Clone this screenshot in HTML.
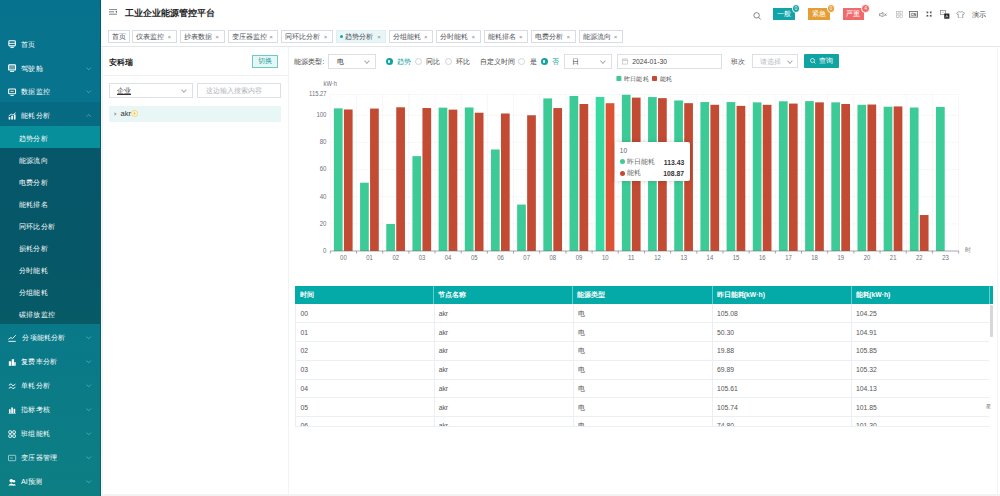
<!DOCTYPE html>
<html><head><meta charset="utf-8">
<style>
*{box-sizing:border-box;margin:0;padding:0}
html,body{width:1000px;height:496px;overflow:hidden;background:#fff;font-family:"Liberation Sans",sans-serif;}
.abs{position:absolute}
.ul .cj{text-decoration:underline}
.cj{display:inline-block;text-align:justify;text-align-last:justify;text-indent:0;white-space:nowrap}
#side{position:absolute;left:0;top:0;width:100.5px;height:496px;background:linear-gradient(180deg,#07728d 0%,#08758b 50%,#0d7f83 100%);overflow:hidden}
#side:after{content:"";position:absolute;right:0;top:0;width:1px;height:100%;background:rgba(0,40,60,.35)}
.mitem{position:absolute;left:0;width:100px;color:#fff;font-size:7.2px;}
.mic{position:absolute;left:8.4px;top:50%;margin-top:-2.5px}
.mt{position:absolute;left:21px;top:50%;margin-top:-2.2px;line-height:8px;white-space:nowrap}
.chev{position:absolute;left:86px;top:50%;margin-top:0px}
.mparent{position:absolute;left:0;width:100px;background:rgba(0,0,0,.07)}
.msub{position:absolute;left:0;width:100px;background:rgba(0,0,0,.25)}
.sitem{position:absolute;left:0;width:100px;height:22px;color:#fff;font-size:7.2px}
.sitem>span{position:absolute;left:18.8px;top:50%;margin-top:-2.4px;line-height:8px;white-space:nowrap}
.sitem.active{background:#078f9b}
#hdr{position:absolute;left:100.5px;top:0;width:899.5px;height:47.2px;border-bottom:1px solid #e4e6ea;background:#fff}
.title{position:absolute;left:124.6px;top:8.1px;font-size:9px;font-weight:bold;color:#222;white-space:nowrap;line-height:10px;letter-spacing:0px}
.tab{position:absolute;top:30px;height:12.6px;border:0.6px solid #d8dce5;background:#fff;font-size:6.8px;color:#4a4e56;white-space:nowrap;line-height:11.8px;padding-left:3.1px}
.tab.act{background:#e8f6f6;border-color:#e0f0f0}
.tab .dot{display:inline-block;width:3px;height:3px;border-radius:50%;background:#1aa1a1;margin-right:2.6px;vertical-align:1px}
.tab .x{position:absolute;right:4.6px;top:0.2px;font-weight:normal;font-size:6.2px;color:#8a8d92}
.badge{position:absolute;top:8.4px;height:11.5px;width:21.6px;color:#fff;font-size:7px;text-align:center;line-height:11.5px}
.cnt{position:absolute;width:8.6px;height:8.6px;border-radius:50%;color:#fff;font-size:5px;text-align:center;line-height:6.4px;border:0.6px solid #fff}
#lp{position:absolute;left:102.4px;top:47.4px;width:185px;height:446.4px;border-left:0.6px solid #f0f1f4;background:#fff}
#rp{position:absolute;left:287.5px;top:47.4px;width:710.5px;height:446.4px;border-left:1.4px solid #f2f3f6;border-right:1.2px solid #f2f3f6;background:#fff}
#gap{position:absolute;left:100.5px;top:47.4px;width:899.5px;height:448.6px;background:#fff}
#bot{position:absolute;left:100.5px;top:493.8px;width:899.5px;height:3px;background:#f2f3f5}
.inp{position:absolute;height:15px;border:0.6px solid #dcdfe6;background:#fff;font-size:7px;color:#333;line-height:14px;white-space:nowrap}
.sel:after{content:"";position:absolute;right:5.6px;top:4.4px;width:2.8px;height:2.8px;border-right:0.55px solid #aaa;border-bottom:0.55px solid #aaa;transform:rotate(45deg)}
.lbl{position:absolute;font-size:7px;color:#444;white-space:nowrap;line-height:8px}
.radio{position:absolute;width:7px;height:7px;border-radius:50%;border:0.6px solid #cfd3da;background:#fff}
.radio.on{border:0;background:#11a2a2}
.radio.on:after{content:"";position:absolute;left:2.2px;top:2.2px;width:2.6px;height:2.6px;border-radius:50%;background:#fff}
svg.chart{position:absolute;left:0;top:0;width:1000px;height:496px}
.al{font-size:6.6px;fill:#6e7079;font-family:"Liberation Sans",sans-serif}
.lg{font-size:6.4px;fill:#555;font-family:"Liberation Sans",sans-serif}
.thead{position:absolute;left:295px;top:286px;width:698px;height:17.6px;background:#04aaa7}
.th{position:absolute;top:291px;font-size:6.8px;color:#fff;font-weight:bold;line-height:8px;white-space:nowrap}
.thsep{position:absolute;top:286px;width:0.6px;height:17.6px;background:#5fd0cc}
.td{position:absolute;font-size:6.8px;color:#555;line-height:18.75px;white-space:nowrap;margin-top:1.3px}
.tbody{position:absolute;left:295px;top:303.6px;width:694.4px;height:123.3px;overflow:hidden;border-left:0.6px solid #ebeef5;border-bottom:0.6px solid #ebeef5}
.rline{position:absolute;left:0;width:694.4px;height:0.6px;background:#ebeef5}
.vline{position:absolute;top:0;width:0.6px;height:122.8px;background:#ebeef5}
</style></head><body>
<div id="gap"></div>
<div id="bot"></div>
<div id="side">
<div class="mitem" style="top:31.00px;height:23.80px"><svg class="mic" viewBox="0 0 10 10" width="8.2" height="8.2"><rect x="1" y="1" width="8" height="6.2" rx="1" fill="none" stroke="#fff" stroke-width="1.3"/><line x1="1" y1="4.1" x2="9" y2="4.1" stroke="#fff" stroke-width="1.1"/><line x1="3" y1="9.2" x2="7" y2="9.2" stroke="#fff" stroke-width="1.2"/></svg><span class="mt"><span class="cj" style="width:2em">首页</span></span></div>
<div class="mitem" style="top:54.80px;height:23.80px"><svg class="mic" viewBox="0 0 10 10" width="8.2" height="8.2"><rect x="0.8" y="1" width="8.4" height="6.4" rx="0.8" fill="rgba(255,255,255,.35)" stroke="#fff" stroke-width="1.3"/><line x1="2.5" y1="9.3" x2="7.5" y2="9.3" stroke="#fff" stroke-width="1.2"/></svg><span class="mt"><span class="cj" style="width:3em">驾驶舱</span></span><svg class="chev" viewBox="0 0 10 6" width="5.5" height="3.3"><polyline points="1,1 5,5 9,1" fill="none" stroke="#8fd3db" stroke-width="0.9"/></svg></div>
<div class="mitem" style="top:78.60px;height:23.80px"><svg class="mic" viewBox="0 0 10 10" width="8.2" height="8.2"><rect x="0.8" y="1.2" width="8.4" height="5.8" rx="0.8" fill="none" stroke="#fff" stroke-width="1.3"/><line x1="3" y1="4.1" x2="7" y2="4.1" stroke="#fff" stroke-width="1"/><line x1="3" y1="9.2" x2="7" y2="9.2" stroke="#fff" stroke-width="1.2"/></svg><span class="mt"><span class="cj" style="width:4em">数据监控</span></span><svg class="chev" viewBox="0 0 10 6" width="5.5" height="3.3"><polyline points="1,1 5,5 9,1" fill="none" stroke="#8fd3db" stroke-width="0.9"/></svg></div>
<div class="mparent" style="top:102.40px;height:24.00px"></div>
<div class="mitem" style="top:102.40px;height:24.00px"><svg class="mic" viewBox="0 0 10 10" width="8.2" height="8.2"><rect x="0.8" y="6.2" width="2" height="3" fill="#fff"/><rect x="4" y="4.6" width="2" height="4.6" fill="#fff"/><rect x="7.2" y="3" width="2" height="6.2" fill="#fff"/><polyline points="0.8,5 4,2.6 6,3.6 9.4,0.8" fill="none" stroke="#fff" stroke-width="1"/></svg><span class="mt"><span class="cj" style="width:4em">能耗分析</span></span><svg class="chev" viewBox="0 0 10 6" width="5.5" height="3.3"><polyline points="1,5 5,1 9,5" fill="none" stroke="#8fd3db" stroke-width="0.9"/></svg></div>
<div class="msub" style="top:126.40px;height:198.00px"></div>
<div class="sitem active" style="top:126.40px"><span><span class="cj" style="width:4em">趋势分析</span></span></div>
<div class="sitem" style="top:148.40px"><span><span class="cj" style="width:4em">能源流向</span></span></div>
<div class="sitem" style="top:170.40px"><span><span class="cj" style="width:4em">电费分析</span></span></div>
<div class="sitem" style="top:192.40px"><span><span class="cj" style="width:4em">能耗排名</span></span></div>
<div class="sitem" style="top:214.40px"><span><span class="cj" style="width:5em">同环比分析</span></span></div>
<div class="sitem" style="top:236.40px"><span><span class="cj" style="width:4em">损耗分析</span></span></div>
<div class="sitem" style="top:258.40px"><span><span class="cj" style="width:4em">分时能耗</span></span></div>
<div class="sitem" style="top:280.40px"><span><span class="cj" style="width:4em">分组能耗</span></span></div>
<div class="sitem" style="top:302.40px"><span><span class="cj" style="width:5em">碳排放监控</span></span></div>
<div class="mitem" style="top:324.40px;height:23.98px"><svg class="mic" viewBox="0 0 10 10" width="8.2" height="8.2"><polyline points="0.5,6.5 3.5,4.3 5.5,5.5 9.5,1.5" fill="none" stroke="#fff" stroke-width="1.1"/><line x1="0.5" y1="9" x2="9.5" y2="9" stroke="#fff" stroke-width="1.1"/></svg><span class="mt" style="left:22.3px"><span class="cj" style="width:6em">分项能耗分析</span></span><svg class="chev" viewBox="0 0 10 6" width="5.5" height="3.3"><polyline points="1,1 5,5 9,1" fill="none" stroke="#8fd3db" stroke-width="0.9"/></svg></div>
<div class="mitem" style="top:348.38px;height:23.98px"><svg class="mic" viewBox="0 0 10 10" width="8.2" height="8.2"><rect x="1" y="4" width="3" height="5.5" fill="#fff"/><rect x="4.6" y="1.5" width="2.8" height="8" fill="#fff"/><rect x="7.6" y="5" width="1.8" height="4.5" fill="#fff"/></svg><span class="mt"><span class="cj" style="width:5em">复费率分析</span></span><svg class="chev" viewBox="0 0 10 6" width="5.5" height="3.3"><polyline points="1,1 5,5 9,1" fill="none" stroke="#8fd3db" stroke-width="0.9"/></svg></div>
<div class="mitem" style="top:372.36px;height:23.98px"><svg class="mic" viewBox="0 0 10 10" width="8.2" height="8.2"><polyline points="1,4 3.8,2.2 6,4.8 9,2.6" fill="none" stroke="#fff" stroke-width="1.1"/><polyline points="1,7.8 3.8,6 6,8.2 9,6.4" fill="none" stroke="#fff" stroke-width="1.1"/></svg><span class="mt"><span class="cj" style="width:4em">单耗分析</span></span><svg class="chev" viewBox="0 0 10 6" width="5.5" height="3.3"><polyline points="1,1 5,5 9,1" fill="none" stroke="#8fd3db" stroke-width="0.9"/></svg></div>
<div class="mitem" style="top:396.34px;height:23.98px"><svg class="mic" viewBox="0 0 10 10" width="8.2" height="8.2"><rect x="1.2" y="4" width="2" height="4.6" fill="#fff"/><rect x="4" y="1.8" width="2" height="6.8" fill="#fff"/><rect x="6.8" y="3.4" width="2" height="5.2" fill="#fff"/><line x1="0.6" y1="9.5" x2="9.4" y2="9.5" stroke="#fff" stroke-width="0.9"/></svg><span class="mt"><span class="cj" style="width:4em">指标考核</span></span><svg class="chev" viewBox="0 0 10 6" width="5.5" height="3.3"><polyline points="1,1 5,5 9,1" fill="none" stroke="#8fd3db" stroke-width="0.9"/></svg></div>
<div class="mitem" style="top:420.32px;height:23.98px"><svg class="mic" viewBox="0 0 10 10" width="8.2" height="8.2"><rect x="1" y="1" width="3.2" height="3.2" rx="0.6" fill="none" stroke="#fff" stroke-width="1.1"/><rect x="5.8" y="1" width="3.2" height="3.2" rx="0.6" fill="none" stroke="#fff" stroke-width="1.1"/><rect x="1" y="5.8" width="3.2" height="3.2" rx="0.6" fill="none" stroke="#fff" stroke-width="1.1"/><rect x="5.8" y="5.8" width="3.2" height="3.2" rx="0.6" fill="none" stroke="#fff" stroke-width="1.1"/></svg><span class="mt"><span class="cj" style="width:4em">班组能耗</span></span><svg class="chev" viewBox="0 0 10 6" width="5.5" height="3.3"><polyline points="1,1 5,5 9,1" fill="none" stroke="#8fd3db" stroke-width="0.9"/></svg></div>
<div class="mitem" style="top:444.30px;height:23.98px"><svg class="mic" viewBox="0 0 10 10" width="8.2" height="8.2"><rect x="0.6" y="1.6" width="8.8" height="6.6" rx="0.6" fill="none" stroke="#bfe3e8" stroke-width="0.9"/><line x1="2.6" y1="4.9" x2="6" y2="4.9" stroke="#bfe3e8" stroke-width="0.8"/></svg><span class="mt"><span class="cj" style="width:5em">变压器管理</span></span><svg class="chev" viewBox="0 0 10 6" width="5.5" height="3.3"><polyline points="1,1 5,5 9,1" fill="none" stroke="#8fd3db" stroke-width="0.9"/></svg></div>
<div class="mitem" style="top:468.28px;height:23.98px"><svg class="mic" viewBox="0 0 10 10" width="8.2" height="8.2"><circle cx="4" cy="3.4" r="2.2" fill="#fff"/><path d="M0.4,9.2 Q4,4.2 7.6,9.2 Z" fill="#fff"/><circle cx="7.2" cy="4" r="1.6" fill="#fff"/><path d="M5.4,9.2 Q7.6,5.4 9.8,9.2 Z" fill="#fff"/></svg><span class="mt">AI<span class="cj" style="width:2em">预测</span></span><svg class="chev" viewBox="0 0 10 6" width="5.5" height="3.3"><polyline points="1,1 5,5 9,1" fill="none" stroke="#8fd3db" stroke-width="0.9"/></svg></div>
</div>
<div id="hdr"></div>
<svg class="abs" style="left:108.8px;top:9.4px" width="8" height="5.6" viewBox="0 0 8 5.6"><line x1="0" y1="0.4" x2="8" y2="0.4" stroke="#555" stroke-width="0.75"/><line x1="0" y1="2.8" x2="5.2" y2="2.8" stroke="#555" stroke-width="0.75"/><line x1="0" y1="5.2" x2="8" y2="5.2" stroke="#555" stroke-width="0.75"/><polygon points="8,1.6 6.4,2.8 8,4" fill="#555"/></svg>
<div class="title"><span class="cj" style="width:10em">工业企业能源管控平台</span></div>
<div class="tab" style="left:108.3px;width:21.30px"><span><span class="cj" style="width:2em">首页</span></span></div>
<div class="tab" style="left:132.1px;width:44.70px"><span><span class="cj" style="width:4em">仪表监控</span></span><b class="x">×</b></div>
<div class="tab" style="left:180px;width:44.50px"><span><span class="cj" style="width:4em">抄表数据</span></span><b class="x">×</b></div>
<div class="tab" style="left:227.6px;width:50.80px"><span><span class="cj" style="width:5em">变压器监控</span></span><b class="x">×</b></div>
<div class="tab" style="left:281px;width:52.00px"><span><span class="cj" style="width:5em">同环比分析</span></span><b class="x">×</b></div>
<div class="tab act" style="left:335.6px;width:50.80px"><i class="dot"></i><span><span class="cj" style="width:4em">趋势分析</span></span><b class="x">×</b></div>
<div class="tab" style="left:388.75px;width:44.50px"><span><span class="cj" style="width:4em">分组能耗</span></span><b class="x">×</b></div>
<div class="tab" style="left:436.25px;width:44.50px"><span><span class="cj" style="width:4em">分时能耗</span></span><b class="x">×</b></div>
<div class="tab" style="left:483.75px;width:44.50px"><span><span class="cj" style="width:4em">能耗排名</span></span><b class="x">×</b></div>
<div class="tab" style="left:530.75px;width:45.00px"><span><span class="cj" style="width:4em">电费分析</span></span><b class="x">×</b></div>
<div class="tab" style="left:578.75px;width:44.25px"><span><span class="cj" style="width:4em">能源流向</span></span><b class="x">×</b></div>
<!-- header right -->
<svg class="abs" style="left:753px;top:11.5px" width="8.5" height="8" viewBox="0 0 10 10"><circle cx="4.2" cy="4.2" r="3.4" fill="none" stroke="#666" stroke-width="1"/><line x1="6.7" y1="6.7" x2="9.3" y2="9.3" stroke="#666" stroke-width="1.1"/></svg>
<div class="badge" style="left:773.2px;background:#10a3a8"><span class="cj" style="width:2em">一般</span></div><div class="cnt" style="left:791.7px;top:4.4px;background:#10a3a8">0</div>
<div class="badge" style="left:808.2px;background:#e59d35"><span class="cj" style="width:2em">紧急</span></div><div class="cnt" style="left:826.7px;top:4.4px;background:#e59d35">0</div>
<div class="badge" style="left:842.7px;background:#ef6a6a"><span class="cj" style="width:2em">严重</span></div><div class="cnt" style="left:861.3px;top:4.4px;background:#ef6a6a">4</div>
<svg class="abs" style="left:878.5px;top:11.5px" width="8" height="5.5" viewBox="0 0 16 11"><path d="M1,3.5 H4 L8,0.5 V10.5 L4,7.5 H1 Z" fill="none" stroke="#666" stroke-width="1.2"/><line x1="10.5" y1="3" x2="15" y2="8" stroke="#666" stroke-width="1.2"/><line x1="15" y1="3" x2="10.5" y2="8" stroke="#666" stroke-width="1.2"/></svg>
<svg class="abs" style="left:896px;top:11px" width="7" height="7" viewBox="0 0 14 14"><rect x="1" y="1" width="5" height="5" fill="none" stroke="#aaa" stroke-width="1.1"/><rect x="8" y="1" width="5" height="5" fill="none" stroke="#aaa" stroke-width="1.1"/><rect x="1" y="8" width="5" height="5" fill="none" stroke="#aaa" stroke-width="1.1"/><rect x="8" y="8" width="5" height="5" fill="none" stroke="#aaa" stroke-width="1.1"/></svg>
<svg class="abs" style="left:909px;top:11.2px" width="9" height="6.6" viewBox="0 0 18 13"><rect x="0.8" y="0.8" width="16.4" height="11.4" fill="#f4f4f4" stroke="#555" stroke-width="1.5"/><text x="9" y="9.6" font-size="7.6" font-weight="bold" text-anchor="middle" fill="#444" font-family="Liberation Sans">CN</text></svg>
<svg class="abs" style="left:926.2px;top:11.4px" width="6.2" height="6.2" viewBox="0 0 12 12"><path d="M1,3.5 L3.5,3.5 L3.5,1 M8.5,1 L8.5,3.5 L11,3.5 M1,8.5 L3.5,8.5 L3.5,11 M8.5,11 L8.5,8.5 L11,8.5" fill="none" stroke="#222" stroke-width="1.5"/><path d="M1,1 L3.5,3.5 M11,1 L8.5,3.5 M1,11 L3.5,8.5 M11,11 L8.5,8.5" stroke="#222" stroke-width="1"/></svg>
<svg class="abs" style="left:940px;top:10.2px" width="9.6" height="8.8" viewBox="0 0 19 17.4"><rect x="0.7" y="0.7" width="10.5" height="8.5" fill="#fff" stroke="#666" stroke-width="1.1"/><rect x="8.4" y="7" width="10.2" height="10.2" fill="#222"/><path d="M11,15 L13.5,9.5 L16,15 M12,13 H15" fill="none" stroke="#fff" stroke-width="0.9"/><path d="M3.5,4 Q6,6 8.5,4" fill="none" stroke="#888" stroke-width="0.8"/></svg>
<svg class="abs" style="left:956px;top:10.6px" width="9" height="7.6" viewBox="0 0 18 15"><path d="M6,1 Q9,3 12,1 L17,4 L15,7 L13.5,6 L13.5,14 L4.5,14 L4.5,6 L3,7 L1,4 Z" fill="none" stroke="#666" stroke-width="1.1"/></svg>
<div class="lbl" style="left:972px;top:10.6px;color:#444;font-size:7px"><span class="cj" style="width:2em">演示</span></div>

<div id="lp"></div>
<div class="abs" style="left:102.6px;top:75px;width:185px;height:0.7px;background:#eef0f4"></div>
<div class="lbl" style="left:109px;top:58.6px;font-size:7.8px;color:#222;font-weight:bold"><span class="cj" style="width:3em">安科瑞</span></div>
<div class="abs" style="left:252px;top:55.3px;width:25.8px;height:12.4px;border:0.7px solid #6cc9c4;background:#e6f6f5;color:#1e9d99;font-size:6.6px;text-align:center;line-height:10px;border-radius:0.6px"><span class="cj" style="width:2em">切换</span></div>
<div class="inp sel ul" style="left:109px;top:83.1px;width:83.6px;padding-left:7px;text-decoration:underline"><span class="cj" style="width:2em">企业</span></div>
<div class="inp" style="left:197.3px;top:83.1px;width:83.7px;padding-left:7.6px;color:#b0b3b8;font-size:6.5px"><span class="cj" style="width:8em">这边输入搜索内容</span></div>
<div class="abs" style="left:109px;top:105.5px;width:172px;height:16.1px;background:#e8f6f6"></div>
<svg class="abs" style="left:114px;top:111.6px" width="3" height="4" viewBox="0 0 3 4"><polygon points="0.5,0.3 2.6,2 0.5,3.7" fill="#999"/></svg>
<div class="lbl" style="left:120.5px;top:110.2px;font-size:7.6px;color:#333">akr</div>
<svg class="abs" style="left:131.4px;top:109.8px" width="7" height="7" viewBox="0 0 14 14"><circle cx="7" cy="7" r="6" fill="#fff8e0" stroke="#f1c232" stroke-width="1.2"/><path d="M7.8,2.5 L4.5,7.5 H7 L6.2,11.5 L9.5,6.5 H7 Z" fill="#f1b70f"/></svg>

<div id="rp"></div>
<div class="lbl" style="left:294.4px;top:58px"><span class="cj" style="width:4em">能源类型</span>:</div>
<div class="inp sel" style="left:328.4px;top:54px;width:47.2px;height:14.6px;padding-left:7.5px;line-height:13.6px"><span class="cj" style="width:1em">电</span></div>
<div class="radio on" style="left:385.6px;top:58.1px"></div><div class="lbl" style="left:397px;top:58px;color:#11a2a2"><span class="cj" style="width:2em">趋势</span></div>
<div class="radio" style="left:415.4px;top:58.1px"></div><div class="lbl" style="left:426.4px;top:58px"><span class="cj" style="width:2em">同比</span></div>
<div class="radio" style="left:444.8px;top:58.1px"></div><div class="lbl" style="left:456px;top:58px"><span class="cj" style="width:2em">环比</span></div>
<div class="lbl" style="left:479.6px;top:58px"><span class="cj" style="width:5em">自定义时间</span></div>
<div class="radio" style="left:518px;top:58.1px"></div><div class="lbl" style="left:529.6px;top:58px"><span class="cj" style="width:1em">是</span></div>
<div class="radio on" style="left:540.6px;top:58.1px"></div><div class="lbl" style="left:552.4px;top:58px;color:#11a2a2"><span class="cj" style="width:1em">否</span></div>
<div class="inp sel" style="left:564.4px;top:54px;width:47.2px;height:14.6px;padding-left:6.8px;line-height:13.6px"><span class="cj" style="width:1em">日</span></div>
<div class="inp" style="left:617.4px;top:54px;width:104.4px;height:14.6px;padding-left:13.8px;line-height:13.6px;color:#444;font-size:6.8px">2024-01-30</div>
<svg class="abs" style="left:622px;top:58px" width="6" height="6.6" viewBox="0 0 12 13"><rect x="1" y="2" width="10" height="10" fill="none" stroke="#aaa" stroke-width="1"/><line x1="1" y1="5" x2="11" y2="5" stroke="#aaa" stroke-width="1"/><line x1="4" y1="0.5" x2="4" y2="3" stroke="#aaa"/><line x1="8" y1="0.5" x2="8" y2="3" stroke="#aaa"/></svg>
<div class="lbl" style="left:731.3px;top:58px"><span class="cj" style="width:2em">班次</span></div>
<div class="inp sel" style="left:751.5px;top:53.8px;width:46.9px;height:14.7px;padding-left:7px;line-height:13.6px;color:#b5b8bd"><span class="cj" style="width:3em">请选择</span></div>
<div class="abs" style="left:804px;top:54.2px;width:35px;height:14.3px;background:#0fa4a2;color:#fff;font-size:7px;line-height:14.3px;padding-left:15.4px;border-radius:1px"><span class="cj" style="width:2em">查询</span></div>
<svg class="abs" style="left:809.8px;top:58.2px" width="6" height="6" viewBox="0 0 12 12"><circle cx="5" cy="5" r="4" fill="none" stroke="#fff" stroke-width="1.4"/><line x1="8" y1="8" x2="11" y2="11" stroke="#fff" stroke-width="1.4"/></svg>

<svg class="chart" viewBox="0 0 1000 496">
<line x1="330.3" y1="223.85" x2="958.6" y2="223.85" stroke="#e6e6e9" stroke-width="0.6" stroke-dasharray="1.4 1.4"/>
<line x1="330.3" y1="196.70" x2="958.6" y2="196.70" stroke="#e6e6e9" stroke-width="0.6" stroke-dasharray="1.4 1.4"/>
<line x1="330.3" y1="169.55" x2="958.6" y2="169.55" stroke="#e6e6e9" stroke-width="0.6" stroke-dasharray="1.4 1.4"/>
<line x1="330.3" y1="142.40" x2="958.6" y2="142.40" stroke="#e6e6e9" stroke-width="0.6" stroke-dasharray="1.4 1.4"/>
<line x1="330.3" y1="115.25" x2="958.6" y2="115.25" stroke="#e6e6e9" stroke-width="0.6" stroke-dasharray="1.4 1.4"/>
<line x1="330.3" y1="94.52" x2="958.6" y2="94.52" stroke="#e6e6e9" stroke-width="0.6" stroke-dasharray="1.4 1.4"/>
<line x1="330.30" y1="94.52" x2="330.30" y2="251.0" stroke="#f1f1f3" stroke-width="0.6"/>
<line x1="356.48" y1="94.52" x2="356.48" y2="251.0" stroke="#f1f1f3" stroke-width="0.6"/>
<line x1="382.66" y1="94.52" x2="382.66" y2="251.0" stroke="#f1f1f3" stroke-width="0.6"/>
<line x1="408.84" y1="94.52" x2="408.84" y2="251.0" stroke="#f1f1f3" stroke-width="0.6"/>
<line x1="435.02" y1="94.52" x2="435.02" y2="251.0" stroke="#f1f1f3" stroke-width="0.6"/>
<line x1="461.20" y1="94.52" x2="461.20" y2="251.0" stroke="#f1f1f3" stroke-width="0.6"/>
<line x1="487.38" y1="94.52" x2="487.38" y2="251.0" stroke="#f1f1f3" stroke-width="0.6"/>
<line x1="513.55" y1="94.52" x2="513.55" y2="251.0" stroke="#f1f1f3" stroke-width="0.6"/>
<line x1="539.73" y1="94.52" x2="539.73" y2="251.0" stroke="#f1f1f3" stroke-width="0.6"/>
<line x1="565.91" y1="94.52" x2="565.91" y2="251.0" stroke="#f1f1f3" stroke-width="0.6"/>
<line x1="592.09" y1="94.52" x2="592.09" y2="251.0" stroke="#f1f1f3" stroke-width="0.6"/>
<line x1="618.27" y1="94.52" x2="618.27" y2="251.0" stroke="#f1f1f3" stroke-width="0.6"/>
<line x1="644.45" y1="94.52" x2="644.45" y2="251.0" stroke="#f1f1f3" stroke-width="0.6"/>
<line x1="670.63" y1="94.52" x2="670.63" y2="251.0" stroke="#f1f1f3" stroke-width="0.6"/>
<line x1="696.81" y1="94.52" x2="696.81" y2="251.0" stroke="#f1f1f3" stroke-width="0.6"/>
<line x1="722.99" y1="94.52" x2="722.99" y2="251.0" stroke="#f1f1f3" stroke-width="0.6"/>
<line x1="749.17" y1="94.52" x2="749.17" y2="251.0" stroke="#f1f1f3" stroke-width="0.6"/>
<line x1="775.35" y1="94.52" x2="775.35" y2="251.0" stroke="#f1f1f3" stroke-width="0.6"/>
<line x1="801.52" y1="94.52" x2="801.52" y2="251.0" stroke="#f1f1f3" stroke-width="0.6"/>
<line x1="827.70" y1="94.52" x2="827.70" y2="251.0" stroke="#f1f1f3" stroke-width="0.6"/>
<line x1="853.88" y1="94.52" x2="853.88" y2="251.0" stroke="#f1f1f3" stroke-width="0.6"/>
<line x1="880.06" y1="94.52" x2="880.06" y2="251.0" stroke="#f1f1f3" stroke-width="0.6"/>
<line x1="906.24" y1="94.52" x2="906.24" y2="251.0" stroke="#f1f1f3" stroke-width="0.6"/>
<line x1="932.42" y1="94.52" x2="932.42" y2="251.0" stroke="#f1f1f3" stroke-width="0.6"/>
<line x1="958.60" y1="94.52" x2="958.60" y2="251.0" stroke="#f1f1f3" stroke-width="0.6"/>
<rect x="333.90" y="108.35" width="8.7" height="142.65" fill="#3ccb96"/>
<rect x="343.90" y="109.48" width="8.7" height="141.52" fill="#c34a33"/>
<rect x="360.08" y="182.72" width="8.7" height="68.28" fill="#3ccb96"/>
<rect x="370.08" y="108.58" width="8.7" height="142.42" fill="#c34a33"/>
<rect x="386.26" y="224.01" width="8.7" height="26.99" fill="#3ccb96"/>
<rect x="396.26" y="107.31" width="8.7" height="143.69" fill="#c34a33"/>
<rect x="412.44" y="156.12" width="8.7" height="94.88" fill="#3ccb96"/>
<rect x="422.44" y="108.03" width="8.7" height="142.97" fill="#c34a33"/>
<rect x="438.62" y="107.63" width="8.7" height="143.37" fill="#3ccb96"/>
<rect x="448.62" y="109.64" width="8.7" height="141.36" fill="#c34a33"/>
<rect x="464.80" y="107.46" width="8.7" height="143.54" fill="#3ccb96"/>
<rect x="474.80" y="112.74" width="8.7" height="138.26" fill="#c34a33"/>
<rect x="490.98" y="149.46" width="8.7" height="101.54" fill="#3ccb96"/>
<rect x="500.98" y="113.49" width="8.7" height="137.51" fill="#c34a33"/>
<rect x="517.15" y="204.57" width="8.7" height="46.43" fill="#3ccb96"/>
<rect x="527.15" y="115.25" width="8.7" height="135.75" fill="#c34a33"/>
<rect x="543.33" y="98.42" width="8.7" height="152.58" fill="#3ccb96"/>
<rect x="553.33" y="108.06" width="8.7" height="142.94" fill="#c34a33"/>
<rect x="569.51" y="95.97" width="8.7" height="155.03" fill="#3ccb96"/>
<rect x="579.51" y="103.98" width="8.7" height="147.02" fill="#c34a33"/>
<rect x="595.69" y="97.02" width="8.7" height="153.98" fill="#37dba1"/>
<rect x="605.69" y="103.21" width="8.7" height="147.79" fill="#dc5235"/>
<rect x="621.87" y="94.75" width="8.7" height="156.25" fill="#3ccb96"/>
<rect x="631.87" y="97.60" width="8.7" height="153.40" fill="#c34a33"/>
<rect x="648.05" y="97.06" width="8.7" height="153.94" fill="#3ccb96"/>
<rect x="658.05" y="98.15" width="8.7" height="152.85" fill="#c34a33"/>
<rect x="674.23" y="100.45" width="8.7" height="150.55" fill="#3ccb96"/>
<rect x="684.23" y="103.17" width="8.7" height="147.83" fill="#c34a33"/>
<rect x="700.41" y="102.08" width="8.7" height="148.92" fill="#3ccb96"/>
<rect x="710.41" y="104.80" width="8.7" height="146.20" fill="#c34a33"/>
<rect x="726.59" y="102.08" width="8.7" height="148.92" fill="#3ccb96"/>
<rect x="736.59" y="105.88" width="8.7" height="145.12" fill="#c34a33"/>
<rect x="752.77" y="102.35" width="8.7" height="148.65" fill="#3ccb96"/>
<rect x="762.77" y="104.80" width="8.7" height="146.20" fill="#c34a33"/>
<rect x="778.95" y="101.27" width="8.7" height="149.73" fill="#3ccb96"/>
<rect x="788.95" y="103.58" width="8.7" height="147.42" fill="#c34a33"/>
<rect x="805.12" y="101.13" width="8.7" height="149.87" fill="#3ccb96"/>
<rect x="815.12" y="102.35" width="8.7" height="148.65" fill="#c34a33"/>
<rect x="831.30" y="102.35" width="8.7" height="148.65" fill="#3ccb96"/>
<rect x="841.30" y="103.98" width="8.7" height="147.02" fill="#c34a33"/>
<rect x="857.48" y="104.80" width="8.7" height="146.20" fill="#3ccb96"/>
<rect x="867.48" y="104.53" width="8.7" height="146.47" fill="#c34a33"/>
<rect x="883.66" y="106.70" width="8.7" height="144.30" fill="#3ccb96"/>
<rect x="893.66" y="106.43" width="8.7" height="144.57" fill="#c34a33"/>
<rect x="909.84" y="107.51" width="8.7" height="143.49" fill="#3ccb96"/>
<rect x="919.84" y="215.03" width="8.7" height="35.97" fill="#c34a33"/>
<rect x="936.02" y="106.97" width="8.7" height="144.03" fill="#3ccb96"/>
<line x1="330.3" y1="251.0" x2="958.6" y2="251.0" stroke="#6e7079" stroke-width="0.6"/>
<line x1="330.30" y1="251.0" x2="330.30" y2="253.6" stroke="#6e7079" stroke-width="0.6"/>
<line x1="356.48" y1="251.0" x2="356.48" y2="253.6" stroke="#6e7079" stroke-width="0.6"/>
<line x1="382.66" y1="251.0" x2="382.66" y2="253.6" stroke="#6e7079" stroke-width="0.6"/>
<line x1="408.84" y1="251.0" x2="408.84" y2="253.6" stroke="#6e7079" stroke-width="0.6"/>
<line x1="435.02" y1="251.0" x2="435.02" y2="253.6" stroke="#6e7079" stroke-width="0.6"/>
<line x1="461.20" y1="251.0" x2="461.20" y2="253.6" stroke="#6e7079" stroke-width="0.6"/>
<line x1="487.38" y1="251.0" x2="487.38" y2="253.6" stroke="#6e7079" stroke-width="0.6"/>
<line x1="513.55" y1="251.0" x2="513.55" y2="253.6" stroke="#6e7079" stroke-width="0.6"/>
<line x1="539.73" y1="251.0" x2="539.73" y2="253.6" stroke="#6e7079" stroke-width="0.6"/>
<line x1="565.91" y1="251.0" x2="565.91" y2="253.6" stroke="#6e7079" stroke-width="0.6"/>
<line x1="592.09" y1="251.0" x2="592.09" y2="253.6" stroke="#6e7079" stroke-width="0.6"/>
<line x1="618.27" y1="251.0" x2="618.27" y2="253.6" stroke="#6e7079" stroke-width="0.6"/>
<line x1="644.45" y1="251.0" x2="644.45" y2="253.6" stroke="#6e7079" stroke-width="0.6"/>
<line x1="670.63" y1="251.0" x2="670.63" y2="253.6" stroke="#6e7079" stroke-width="0.6"/>
<line x1="696.81" y1="251.0" x2="696.81" y2="253.6" stroke="#6e7079" stroke-width="0.6"/>
<line x1="722.99" y1="251.0" x2="722.99" y2="253.6" stroke="#6e7079" stroke-width="0.6"/>
<line x1="749.17" y1="251.0" x2="749.17" y2="253.6" stroke="#6e7079" stroke-width="0.6"/>
<line x1="775.35" y1="251.0" x2="775.35" y2="253.6" stroke="#6e7079" stroke-width="0.6"/>
<line x1="801.52" y1="251.0" x2="801.52" y2="253.6" stroke="#6e7079" stroke-width="0.6"/>
<line x1="827.70" y1="251.0" x2="827.70" y2="253.6" stroke="#6e7079" stroke-width="0.6"/>
<line x1="853.88" y1="251.0" x2="853.88" y2="253.6" stroke="#6e7079" stroke-width="0.6"/>
<line x1="880.06" y1="251.0" x2="880.06" y2="253.6" stroke="#6e7079" stroke-width="0.6"/>
<line x1="906.24" y1="251.0" x2="906.24" y2="253.6" stroke="#6e7079" stroke-width="0.6"/>
<line x1="932.42" y1="251.0" x2="932.42" y2="253.6" stroke="#6e7079" stroke-width="0.6"/>
<line x1="958.60" y1="251.0" x2="958.60" y2="253.6" stroke="#6e7079" stroke-width="0.6"/>
<text x="326.5" y="252.90" text-anchor="end" class="al" textLength="3.4" lengthAdjust="spacingAndGlyphs">0</text>
<text x="326.5" y="225.75" text-anchor="end" class="al" textLength="6.8" lengthAdjust="spacingAndGlyphs">20</text>
<text x="326.5" y="198.60" text-anchor="end" class="al" textLength="6.8" lengthAdjust="spacingAndGlyphs">40</text>
<text x="326.5" y="171.45" text-anchor="end" class="al" textLength="6.8" lengthAdjust="spacingAndGlyphs">60</text>
<text x="326.5" y="144.30" text-anchor="end" class="al" textLength="6.8" lengthAdjust="spacingAndGlyphs">80</text>
<text x="326.5" y="117.15" text-anchor="end" class="al" textLength="10.1" lengthAdjust="spacingAndGlyphs">100</text>
<text x="326.5" y="96.42" text-anchor="end" class="al" textLength="17.4" lengthAdjust="spacingAndGlyphs">115.27</text>
<text x="343.39" y="259.8" text-anchor="middle" class="al" textLength="6.6" lengthAdjust="spacingAndGlyphs">00</text>
<text x="369.57" y="259.8" text-anchor="middle" class="al" textLength="6.6" lengthAdjust="spacingAndGlyphs">01</text>
<text x="395.75" y="259.8" text-anchor="middle" class="al" textLength="6.6" lengthAdjust="spacingAndGlyphs">02</text>
<text x="421.93" y="259.8" text-anchor="middle" class="al" textLength="6.6" lengthAdjust="spacingAndGlyphs">03</text>
<text x="448.11" y="259.8" text-anchor="middle" class="al" textLength="6.6" lengthAdjust="spacingAndGlyphs">04</text>
<text x="474.29" y="259.8" text-anchor="middle" class="al" textLength="6.6" lengthAdjust="spacingAndGlyphs">05</text>
<text x="500.46" y="259.8" text-anchor="middle" class="al" textLength="6.6" lengthAdjust="spacingAndGlyphs">06</text>
<text x="526.64" y="259.8" text-anchor="middle" class="al" textLength="6.6" lengthAdjust="spacingAndGlyphs">07</text>
<text x="552.82" y="259.8" text-anchor="middle" class="al" textLength="6.6" lengthAdjust="spacingAndGlyphs">08</text>
<text x="579.00" y="259.8" text-anchor="middle" class="al" textLength="6.6" lengthAdjust="spacingAndGlyphs">09</text>
<text x="605.18" y="259.8" text-anchor="middle" class="al" textLength="6.6" lengthAdjust="spacingAndGlyphs">10</text>
<text x="631.36" y="259.8" text-anchor="middle" class="al" textLength="6.6" lengthAdjust="spacingAndGlyphs">11</text>
<text x="657.54" y="259.8" text-anchor="middle" class="al" textLength="6.6" lengthAdjust="spacingAndGlyphs">12</text>
<text x="683.72" y="259.8" text-anchor="middle" class="al" textLength="6.6" lengthAdjust="spacingAndGlyphs">13</text>
<text x="709.90" y="259.8" text-anchor="middle" class="al" textLength="6.6" lengthAdjust="spacingAndGlyphs">14</text>
<text x="736.08" y="259.8" text-anchor="middle" class="al" textLength="6.6" lengthAdjust="spacingAndGlyphs">15</text>
<text x="762.26" y="259.8" text-anchor="middle" class="al" textLength="6.6" lengthAdjust="spacingAndGlyphs">16</text>
<text x="788.44" y="259.8" text-anchor="middle" class="al" textLength="6.6" lengthAdjust="spacingAndGlyphs">17</text>
<text x="814.61" y="259.8" text-anchor="middle" class="al" textLength="6.6" lengthAdjust="spacingAndGlyphs">18</text>
<text x="840.79" y="259.8" text-anchor="middle" class="al" textLength="6.6" lengthAdjust="spacingAndGlyphs">19</text>
<text x="866.97" y="259.8" text-anchor="middle" class="al" textLength="6.6" lengthAdjust="spacingAndGlyphs">20</text>
<text x="893.15" y="259.8" text-anchor="middle" class="al" textLength="6.6" lengthAdjust="spacingAndGlyphs">21</text>
<text x="919.33" y="259.8" text-anchor="middle" class="al" textLength="6.6" lengthAdjust="spacingAndGlyphs">22</text>
<text x="945.51" y="259.8" text-anchor="middle" class="al" textLength="6.6" lengthAdjust="spacingAndGlyphs">23</text>
<text x="323.6" y="86" class="al" textLength="13.4" lengthAdjust="spacingAndGlyphs">kW·h</text>
<text x="965.2" y="252.4" class="al" style="font-size:6px">时</text>
<rect x="616.4" y="76" width="5" height="5" rx="0.8" fill="#3ccb96"/>
<text x="624" y="80.8" class="lg" textLength="24.6" lengthAdjust="spacing">昨日能耗</text>
<rect x="652" y="76" width="5" height="5" rx="0.8" fill="#c34a33"/>
<text x="659.8" y="80.8" class="lg" textLength="11.8" lengthAdjust="spacing">能耗</text>
</svg>
<!-- tooltip -->
<div class="abs" style="left:614.5px;top:142px;width:75.2px;height:38.8px;background:#fff;border-radius:2px;box-shadow:0 0 5px rgba(0,0,0,.18)"></div>
<div class="lbl" style="left:619.8px;top:146.5px;font-size:6.6px;color:#666">10</div>
<div class="abs" style="left:620px;top:159.2px;width:5px;height:5px;border-radius:50%;background:#3ccb96"></div>
<div class="lbl" style="left:626.8px;top:158.4px;font-size:6.8px;color:#666"><span class="cj" style="width:4em">昨日能耗</span></div>
<div class="lbl" style="left:663.8px;top:158.6px;font-size:6.8px;color:#333;font-weight:bold">113.43</div>
<div class="abs" style="left:620px;top:170.6px;width:5px;height:5px;border-radius:50%;background:#c34a33"></div>
<div class="lbl" style="left:626.8px;top:169.4px;font-size:6.8px;color:#666"><span class="cj" style="width:2em">能耗</span></div>
<div class="lbl" style="left:663.3px;top:169.6px;font-size:6.8px;color:#333;font-weight:bold">108.87</div>

<div class="thead"></div>
<div class="th" style="left:300.0px"><span class="cj" style="width:2em">时间</span></div>
<div class="th" style="left:438.3px"><span class="cj" style="width:4em">节点名称</span></div>
<div class="thsep" style="left:433.3px"></div>
<div class="th" style="left:577.4px"><span class="cj" style="width:4em">能源类型</span></div>
<div class="thsep" style="left:572.4px"></div>
<div class="th" style="left:716.6px"><span class="cj" style="width:4em">昨日能耗</span>(kW·h)</div>
<div class="thsep" style="left:711.6px"></div>
<div class="th" style="left:855.6px"><span class="cj" style="width:2em">能耗</span>(kW·h)</div>
<div class="thsep" style="left:850.6px"></div>
<div class="thsep" style="left:989.4px"></div>
<div class="tbody"><div class="td" style="left:4.4px;top:0.00px">00</div>
<div class="td" style="left:142.7px;top:0.00px">akr</div>
<div class="td" style="left:281.8px;top:0.00px"><span class="cj" style="width:1em">电</span></div>
<div class="td" style="left:421.0px;top:0.00px">105.08</div>
<div class="td" style="left:560.0px;top:0.00px">104.25</div>
<div class="rline" style="top:18.75px"></div>
<div class="td" style="left:4.4px;top:18.75px">01</div>
<div class="td" style="left:142.7px;top:18.75px">akr</div>
<div class="td" style="left:281.8px;top:18.75px"><span class="cj" style="width:1em">电</span></div>
<div class="td" style="left:421.0px;top:18.75px">50.30</div>
<div class="td" style="left:560.0px;top:18.75px">104.91</div>
<div class="rline" style="top:37.50px"></div>
<div class="td" style="left:4.4px;top:37.50px">02</div>
<div class="td" style="left:142.7px;top:37.50px">akr</div>
<div class="td" style="left:281.8px;top:37.50px"><span class="cj" style="width:1em">电</span></div>
<div class="td" style="left:421.0px;top:37.50px">19.88</div>
<div class="td" style="left:560.0px;top:37.50px">105.85</div>
<div class="rline" style="top:56.25px"></div>
<div class="td" style="left:4.4px;top:56.25px">03</div>
<div class="td" style="left:142.7px;top:56.25px">akr</div>
<div class="td" style="left:281.8px;top:56.25px"><span class="cj" style="width:1em">电</span></div>
<div class="td" style="left:421.0px;top:56.25px">69.89</div>
<div class="td" style="left:560.0px;top:56.25px">105.32</div>
<div class="rline" style="top:75.00px"></div>
<div class="td" style="left:4.4px;top:75.00px">04</div>
<div class="td" style="left:142.7px;top:75.00px">akr</div>
<div class="td" style="left:281.8px;top:75.00px"><span class="cj" style="width:1em">电</span></div>
<div class="td" style="left:421.0px;top:75.00px">105.61</div>
<div class="td" style="left:560.0px;top:75.00px">104.13</div>
<div class="rline" style="top:93.75px"></div>
<div class="td" style="left:4.4px;top:93.75px">05</div>
<div class="td" style="left:142.7px;top:93.75px">akr</div>
<div class="td" style="left:281.8px;top:93.75px"><span class="cj" style="width:1em">电</span></div>
<div class="td" style="left:421.0px;top:93.75px">105.74</div>
<div class="td" style="left:560.0px;top:93.75px">101.85</div>
<div class="rline" style="top:112.50px"></div>
<div class="td" style="left:4.4px;top:112.50px">06</div>
<div class="td" style="left:142.7px;top:112.50px">akr</div>
<div class="td" style="left:281.8px;top:112.50px"><span class="cj" style="width:1em">电</span></div>
<div class="td" style="left:421.0px;top:112.50px">74.80</div>
<div class="td" style="left:560.0px;top:112.50px">101.30</div>
<div class="vline" style="left:137.7px"></div>
<div class="vline" style="left:276.8px"></div>
<div class="vline" style="left:416.0px"></div>
<div class="vline" style="left:555.0px"></div></div>
<div class="abs" style="left:990px;top:304.8px;width:2.6px;height:32px;background:#d5d7db;border-radius:1px"></div>
<div class="lbl" style="left:986px;top:402px;font-size:5px;color:#666"><span class="cj" style="width:1em">星</span></div>
</body></html>
